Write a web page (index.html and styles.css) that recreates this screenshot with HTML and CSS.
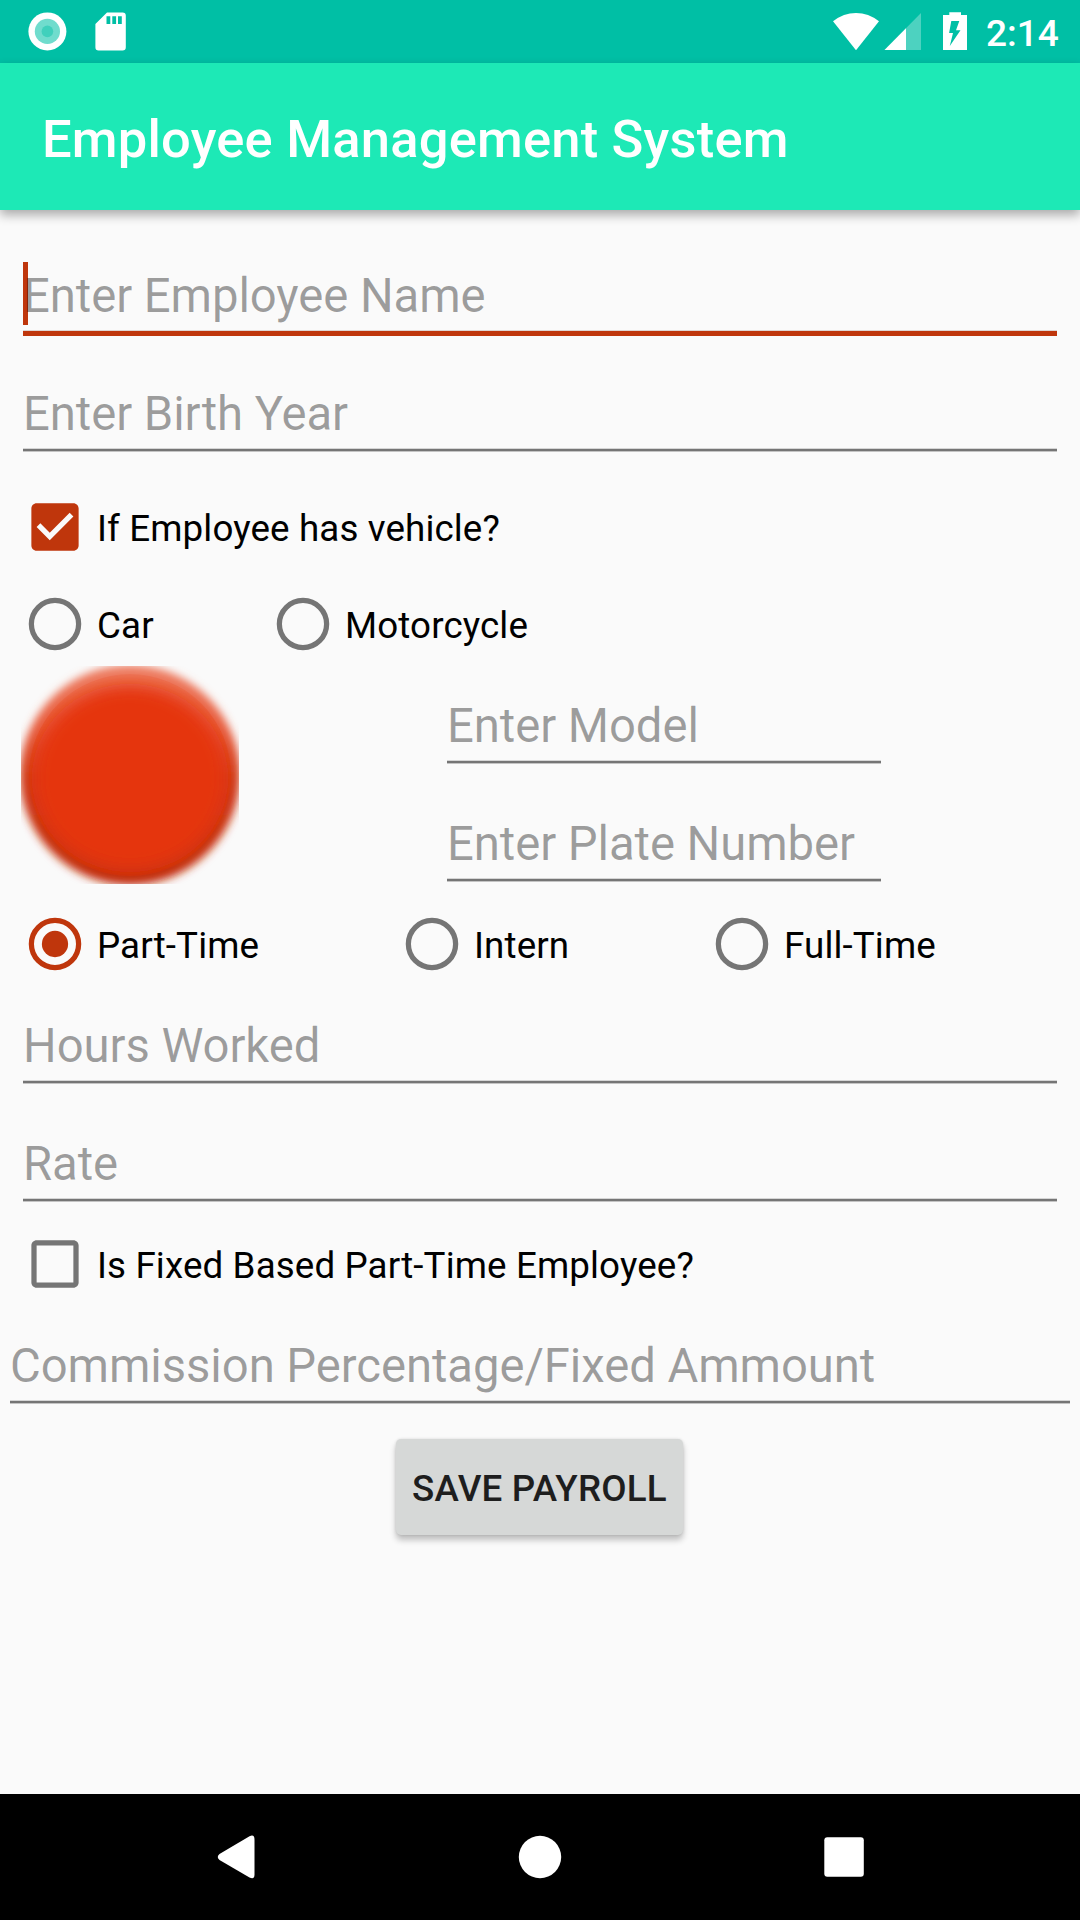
FILE: index.html
```html
<!DOCTYPE html>
<html lang="en">
<head>
<meta charset="utf-8">
<title>Employee Management System</title>
<link rel="stylesheet" href="styles.css">
</head>
<body>
<div class="screen">
  <header class="status-bar">
    <svg class="status-left" width="140" height="63" viewBox="0 0 140 63">
      <circle cx="47.4" cy="31.4" r="19" fill="#fff"/>
      <circle cx="47.4" cy="31.4" r="12.6" fill="#70dccd"/>
      <circle cx="47.4" cy="31.4" r="5.8" fill="#40d0bc"/>
      <path fill="#fff" fill-rule="evenodd" d="M107 12.4H122.600a3.200 3.200 0 0 1 3.200 3.200V47.200a3.200 3.200 0 0 1-3.200 3.200H98.600a3.200 3.200 0 0 1-3.200-3.200V24zM106.500 16.300V24h3.800v-7.700zM112.300 16.300V24h3.800v-7.700zM118 16.300V24h3.800v-7.700z"/>
    </svg>
    <div class="status-right">
      <svg width="140" height="63" viewBox="830 0 140 63">
        <path fill="#fff" d="M833 21.300Q843.500 13 856 13T879 21.300L856 50.200z"/>
        <path fill="#fff" fill-opacity=".3" d="M921 13V50H884.500z"/>
        <path fill="#fff" d="M906 28.200V50H884.500z"/>
        <path fill="#fff" fill-rule="evenodd" d="M949.300 12.200H961V15h6V50H943V15h6.300zM951.300 21L949.100 33.100H953L949.800 46L960.500 30.300H956L959.300 21z"/>
      </svg>
      <span class="clock">2:14</span>
    </div>
  </header>
  <div class="app-bar"><h1 class="title">Employee Management System</h1></div>

  <main class="form">
    <div class="field focused"><span class="cursor"></span><span class="hint">Enter Employee Name</span></div>
    <div class="field"><span class="hint">Enter Birth Year</span></div>

    <div class="choice spaced">
      <svg class="mark" viewBox="-.19 -.19 24.38 24.38"><path fill="#bf360c" d="M19 3H5c-1.110 0-2 .9-2 2v14c0 1.100.89 2 2 2h14c1.110 0 2-.9 2-2V5c0-1.100-.89-2-2-2zm-9 14l-5-5 1.410-1.410L10 14.170l7.590-7.590L19 8l-9 9z"/></svg>
      <span>If Employee has vehicle?</span>
    </div>

    <div class="group vehicle-types">
      <div class="choice"><svg class="mark" viewBox="-.19 -.19 24.38 24.38"><circle class="ring" cx="12" cy="12" r="9"/></svg><span>Car</span></div>
      <div class="choice"><svg class="mark" viewBox="-.19 -.19 24.38 24.38"><circle class="ring" cx="12" cy="12" r="9"/></svg><span>Motorcycle</span></div>
    </div>

    <div class="vehicle">
      <svg class="ball" width="218" height="218" viewBox="0 0 218 218">
        <defs>
          <linearGradient id="rim" x1="0" y1="0" x2="0" y2="1">
            <stop offset="0" stop-color="#ee7f64"/>
            <stop offset=".3" stop-color="#e75a3a"/>
            <stop offset=".52" stop-color="#d13814"/>
            <stop offset="1" stop-color="#c22e0d"/>
          </linearGradient>
          <filter id="soft"><feGaussianBlur stdDeviation="4.500"/></filter>
          <filter id="core" x="-20%" y="-20%" width="140%" height="140%"><feGaussianBlur stdDeviation="9"/></filter>
          <clipPath id="disc"><circle cx="109" cy="109" r="101"/></clipPath>
        </defs>
        <circle cx="109" cy="109" r="110" fill="url(#rim)" filter="url(#soft)"/>
        <g clip-path="url(#disc)"><ellipse cx="109" cy="112" rx="98" ry="94" fill="#e5360f" filter="url(#core)"/></g>
      </svg>
      <div class="vehicle-fields">
        <div class="field"><span class="hint">Enter Model</span></div>
        <div class="field"><span class="hint">Enter Plate Number</span></div>
      </div>
    </div>

    <div class="group job-types">
      <div class="choice"><svg class="mark" viewBox="-.19 -.19 24.38 24.38"><circle class="ring on" cx="12" cy="12" r="9"/><circle cx="12" cy="12" r="5" fill="#bf360c"/></svg><span>Part-Time</span></div>
      <div class="choice"><svg class="mark" viewBox="-.19 -.19 24.38 24.38"><circle class="ring" cx="12" cy="12" r="9"/></svg><span>Intern</span></div>
      <div class="choice"><svg class="mark" viewBox="-.19 -.19 24.38 24.38"><circle class="ring" cx="12" cy="12" r="9"/></svg><span>Full-Time</span></div>
    </div>

    <div class="field"><span class="hint">Hours Worked</span></div>
    <div class="field"><span class="hint">Rate</span></div>

    <div class="choice">
      <svg class="mark" viewBox="-.19 -.19 24.38 24.38"><path fill="#757575" d="M19 5v14H5V5h14m0-2H5c-1.100 0-2 .9-2 2v14c0 1.100.9 2 2 2h14c1.100 0 2-.9 2-2V5c0-1.100-.9-2-2-2z"/></svg>
      <span>Is Fixed Based Part-Time Employee?</span>
    </div>

    <div class="field wide"><span class="hint">Commission Percentage/Fixed Ammount</span></div>
    <button class="save" type="button">SAVE PAYROLL</button>
  </main>

  <nav class="nav-bar">
    <svg width="1080" height="126" viewBox="0 0 1080 126" fill="#fff">
      <path d="M249.500 42.300Q254.500 40 254.500 45.500V80.500Q254.500 86 249.500 83.500L219.500 66Q216 63 219.500 60z"/>
      <circle cx="540" cy="63" r="21.200"/>
      <rect x="824.300" y="43.200" width="39.500" height="39.600" rx="3"/>
    </svg>
  </nav>
</div>
</body>
</html>
```
FILE: styles.css
```css
* {
  box-sizing: border-box;
}

body {
  margin: 0;
  background: #fafafa;
  font-family: Roboto, "Liberation Sans", sans-serif;
}

svg {
  display: block;
  flex: none;
}

.screen {
  display: flex;
  flex-direction: column;
  width: 1080px;
  height: 1920px;
  overflow: hidden;
}

.status-bar {
  display: flex;
  justify-content: space-between;
  height: 63px;
  flex: none;
  background: #00bfa5;
  color: #fff;
}

.status-right {
  display: flex;
  align-items: center;
  gap: 16px;
  width: 250px;
}

.clock {
  font-size: 37px;
  font-weight: 500;
  line-height: 44px;
  padding-top: 4px;
}

.app-bar {
  display: flex;
  align-items: center;
  height: 147px;
  flex: none;
  padding: 4px 42px 0;
  background: #1de9b6;
  box-shadow: 0 5px 10px rgba(0, 0, 0, 0.32);
}

.title {
  margin: 0;
  color: #fff;
  font-size: 52.5px;
  font-weight: 500;
  letter-spacing: 0.2px;
  line-height: 62px;
  white-space: nowrap;
}

.form {
  display: flex;
  flex-direction: column;
  flex: 1;
  padding-top: 26px;
}

.field {
  position: relative;
  height: 118px;
  flex: none;
  margin: 0 23px;
  padding-top: 32px;
  background: linear-gradient(#d5d5d5 1px, #757575 1px 3px, #c4c4c4 3px) 0 94px / 100% 4px no-repeat;
}

.field.focused {
  background: linear-gradient(#dfd5d2 1px, #bf360c 1px) 0 94px / 100% 6px no-repeat;
}

.field.wide {
  margin: 0 10px;
}

.hint {
  position: relative;
  display: block;
  color: rgba(0, 0, 0, 0.38);
  font-size: 47.25px;
  letter-spacing: -0.07px;
  line-height: 56px;
  white-space: nowrap;
}

.cursor {
  position: absolute;
  left: 0;
  top: 26px;
  width: 5px;
  height: 63px;
  background: #bf360c;
}

.choice {
  display: flex;
  align-items: center;
  gap: 10px;
  height: 84px;
  flex: none;
  padding-left: 23px;
  color: #000;
  font-size: 36.75px;
  letter-spacing: 0.12px;
  line-height: 44px;
  white-space: nowrap;
}

.choice span {
  padding-top: 4px;
}

.choice.spaced {
  margin: 13px 0;
}

.mark {
  width: 64px;
  height: 64px;
}

.ring {
  fill: none;
  stroke: #757575;
  stroke-width: 2;
}

.ring.on {
  stroke: #bf360c;
}

.group {
  display: grid;
}

.vehicle-types {
  grid-template-columns: 248px auto;
}

.job-types {
  grid-template-columns: 377px 310px auto;
}

.vehicle {
  display: flex;
  height: 236px;
  padding-left: 21px;
}

.vehicle-fields {
  width: 480px;
  margin-left: 185px;
}

.save {
  align-self: center;
  width: 287px;
  height: 96px;
  margin: 15px 0 0 -1px;
  padding: 4px 0 0;
  border: 0;
  border-radius: 5px;
  background: #d6d8d7;
  box-shadow: 0 5px 6px rgba(0, 0, 0, 0.24), 0 0 3px rgba(0, 0, 0, 0.12);
  color: #1e1e1e;
  font-family: inherit;
  font-size: 36.75px;
  font-weight: 500;
  letter-spacing: 0.2px;
  line-height: 44px;
  white-space: nowrap;
}

.nav-bar {
  height: 126px;
  flex: none;
  background: #000;
}
```
